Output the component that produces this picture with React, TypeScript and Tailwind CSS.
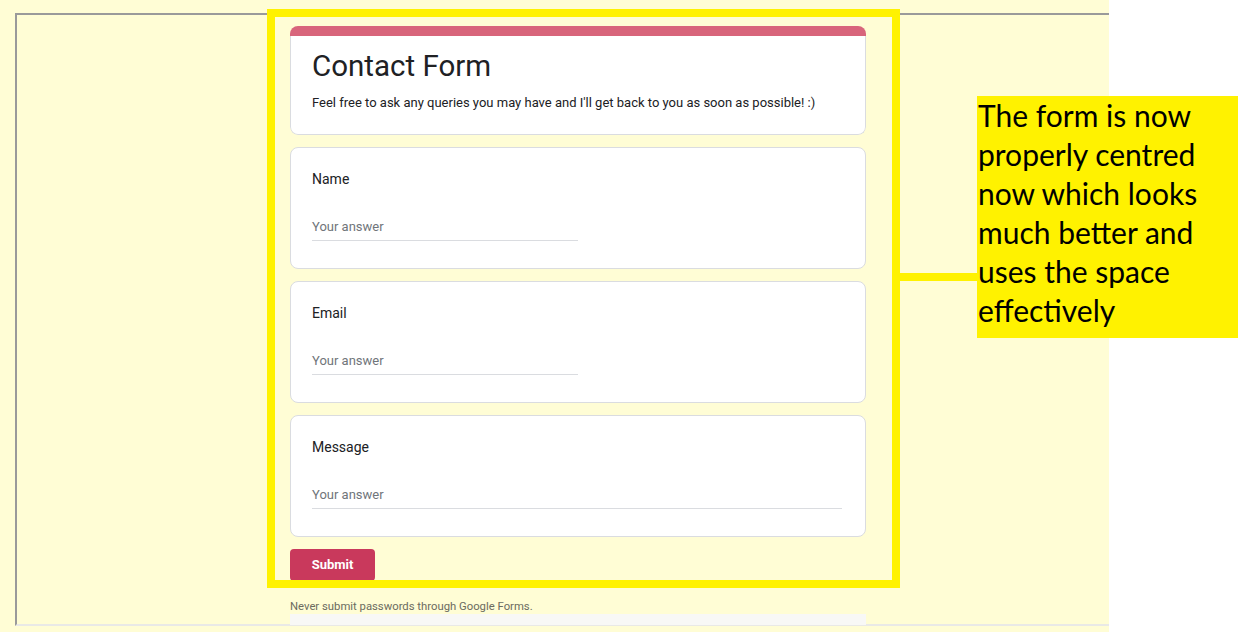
import React from "react";

function FieldCard({ label, wide }: { label: string; wide?: boolean }) {
  return (
    <div className="bg-white border border-[#dadce0] rounded-[8px] h-[122px] pl-[21px] pr-[23px] pt-[21px]">
      <div className="text-[14px] leading-[20px] text-[#202124]" style={{ fontFamily: "Roboto, sans-serif" }}>
        {label}
      </div>
      <div className={`mt-[29px] border-b border-[#dadce0] pb-[4px] ${wide ? "w-full" : "w-[266px]"}`}>
        <div className="text-[13px] leading-[18px] text-[#70757a]" style={{ fontFamily: "Roboto, sans-serif" }}>
          Your answer
        </div>
      </div>
    </div>
  );
}

export default function App() {
  return (
    <div className="relative w-[1238px] h-[632px] bg-white overflow-hidden" style={{ fontFamily: "Roboto, sans-serif" }}>
      <div className="w-[1109px] h-[632px] bg-[#fffdd5] pt-[13px] pl-[15px]">
        <div className="w-[1094px] h-[613px] border-t-2 border-l-2 border-b-2 border-t-[#9a9a9a] border-l-[#9a9a9a] border-b-[#e9e9e6] pt-[11px] pl-[273px]">
          <div className="w-[576px] flex flex-col gap-[12px]">
            <div className="rounded-[8px] overflow-hidden">
              <div className="h-[10px] bg-[#d8657b]" />
              <div className="bg-white border border-t-0 border-[#dadce0] rounded-b-[8px] h-[99px] pl-[21px] pt-[10px]">
                <div className="text-[29.5px] leading-[40px] text-[#202124]" style={{ fontFamily: "Roboto, sans-serif" }}>
                  Contact Form
                </div>
                <div className="mt-[9px] text-[13px] leading-[16px] text-[#202124]">
                  Feel free to ask any queries you may have and I'll get back to you as soon as possible! :)
                </div>
              </div>
            </div>
            <FieldCard label="Name" />
            <FieldCard label="Email" />
            <FieldCard label="Message" wide />
            <div>
              <button className="w-[85px] h-[32px] rounded-[4px] bg-[#c9395c] text-white text-[13px] font-bold">
                Submit
              </button>
            </div>
          </div>
          <div className="mt-[19px] text-[11.3px] leading-[14px] text-[#6b6b60]">
            Never submit passwords through Google Forms.
          </div>
          <div className="w-[576px] h-[11px] bg-[#f8f8f6]" />
        </div>
      </div>

      {/* annotation overlays */}
      <div className="absolute left-[267px] top-[9px] w-[633px] h-[579px] border-[8px] border-[#fff200]" />
      <div className="absolute left-[899px] top-[273px] w-[78px] h-[8px] bg-[#fff200]" />
      <div
        className="absolute left-[977px] top-[96px] w-[261px] h-[242px] bg-[#fff200] pl-[1px] text-[30px] leading-[39px] text-black"
        style={{ fontFamily: "Lato, sans-serif" }}
      >
        The form is now properly centred now which looks much better and uses the space effectively
      </div>
    </div>
  );
}
